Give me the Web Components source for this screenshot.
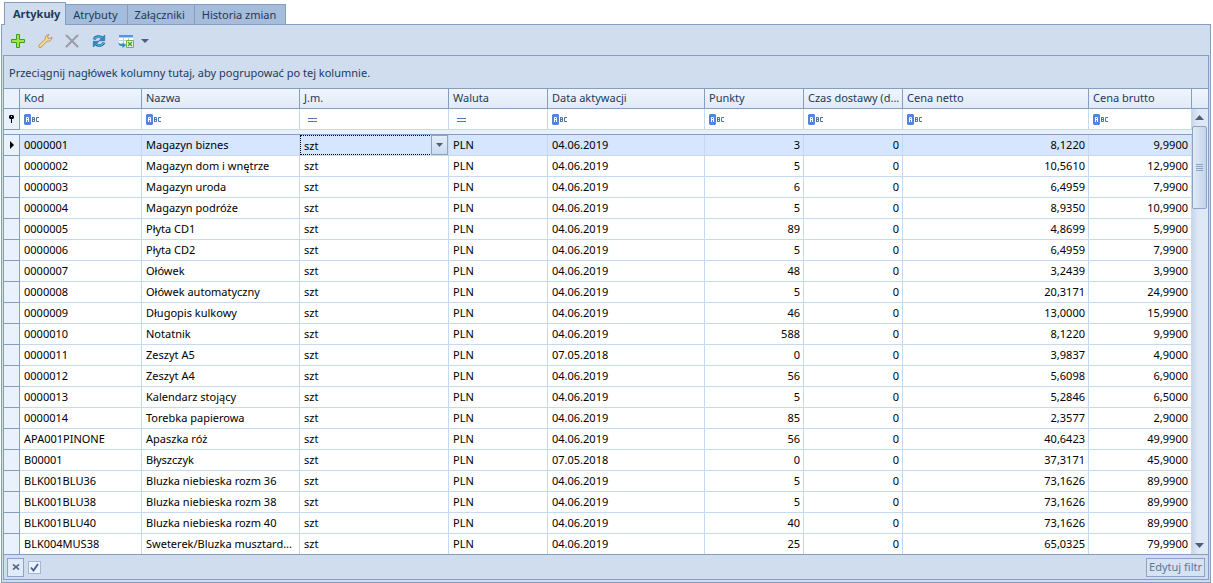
<!DOCTYPE html>
<html lang="pl">
<head>
<meta charset="utf-8">
<title>Artykuły</title>
<style>
html, body { margin: 0; background: #fff; }
body { font: 11px/16px "Noto Sans", "Open Sans", sans-serif; color: #1e395b; padding: 2px 2px 0 1px; --line: #859ebf; --panel: #cfddee; --soft: #c5d9f1; }
</style>
</head>
<body>
<article-view></article-view>

<template id="view-tpl">
<style>
:host { display: block; }
.panel { border: 1px solid var(--line); background: var(--panel); padding: 0 1px 2px; }
</style>
<tab-strip></tab-strip>
<div class="panel">
  <tool-bar></tool-bar>
  <data-grid></data-grid>
</div>
</template>

<template id="tabs-tpl">
<style>
:host { display: flex; align-items: flex-end; padding-left: 3px; margin-bottom: -1px; position: relative; }
button { font: inherit; color: inherit; margin: 0 0 1px; height: 20px; padding: 0 9px 0 7px; border: 1px solid var(--line); border-width: 1px 1px 0 0; background: #a5bcda; }
button[aria-selected=true] { height: 23px; margin: 0; padding: 0 5px 1px 8px; border-left-width: 1px; font-weight: bold; background: var(--panel); }
</style>
<button role="tab" aria-selected="true">Artykuły</button>
<button role="tab" aria-selected="false">Atrybuty</button>
<button role="tab" aria-selected="false">Załączniki</button>
<button role="tab" aria-selected="false">Historia zmian</button>
</template>

<template id="tools-tpl">
<style>
:host { display: flex; align-items: center; gap: 3px; height: 30px; padding: 2px 0 0 3px; box-sizing: border-box; }
button { width: 24px; height: 24px; padding: 0; border: 0; background: none; display: grid; place-items: center; }
button.more { width: 16px; margin-left: -4px; }
svg { display: block; }
</style>
<button aria-label="Dodaj"><svg width="16" height="16" viewBox="0 0 16 16"><path d="M6.5 1.5h3v5h5v3h-5v5h-3v-5h-5v-3h5z" fill="#a5e63c" stroke="#3a9c2c"/></svg></button>
<button aria-label="Edytuj"><svg width="16" height="16" viewBox="0 0 16 16"><path d="M2 12.200L8.200 6.200C7.800 4 9.200 1.800 12 1.600L10.600 3.600l.4 1.600 1.800.4L15 4.200c0 2.800-2.200 4.600-4.800 3.900L4.200 14.200C2.700 15.500 .8 13.700 2 12.200z" fill="#fbd58a" stroke="#a98556" stroke-width=".8"/></svg></button>
<button aria-label="Usuń" disabled><svg width="16" height="16" viewBox="0 0 16 16"><path d="M2.500 2.500l11 11M13.500 2.500l-11 11" stroke="#9a9da3" stroke-width="2" stroke-linecap="round"/></svg></button>
<button aria-label="Odśwież"><svg width="16" height="16" viewBox="0 0 16 16"><path d="M3 6.500C4 3.600 8.600 2.600 11 4.800" fill="none" stroke="#17659d" stroke-width="2.800"/><path d="M3.200 6.200C4.400 3.800 8.600 3 10.800 4.900" fill="none" stroke="#5cbcea" stroke-width="1.200"/><path d="M13.700 2v5.700H8z" fill="#2b8cc6" stroke="#17659d" stroke-width=".6"/><path d="M13 9.500C12 12.400 7.400 13.400 5 11.200" fill="none" stroke="#17659d" stroke-width="2.800"/><path d="M12.800 9.800C11.600 12.200 7.400 13 5.200 11.100" fill="none" stroke="#5cbcea" stroke-width="1.200"/><path d="M2.300 14V8.300H8z" fill="#2b8cc6" stroke="#17659d" stroke-width=".6"/></svg></button>
<button aria-label="Eksportuj"><svg width="16" height="16" viewBox="0 0 16 16"><path d="M1 2h14v8H1z" fill="#fff"/><path d="M1 2h14v2.500H1z" fill="#5d93dd"/><path d="M1 7.500h14M5.500 5v5M10.500 5v5" stroke="#c3cedd"/><path d="M.500 9.500c0 3 2 3.500 4 3.500v2l3.500-2.800L4.500 9.500v1.700C2.500 11.200 1.500 10.700 .5 9.500z" fill="#2e8bc9"/><path d="M8.500 7.500h7v7h-7z" fill="#e9f8e2" stroke="#6cb353"/><path d="M10 9l4 4M14 9l-4 4" stroke="#3d9a2c" stroke-width="1.200"/></svg></button>
<button class="more" aria-label="Więcej"><svg width="8" height="4" viewBox="0 0 8 4"><path d="M0 0h8L4 4z" fill="#4b5f80"/></svg></button>
</template>

<template id="scroll-tpl">
<style>
:host { display: flex; flex-direction: column; background: linear-gradient(90deg, #c7d7eb, #dfe9f5 40%, #dfe9f5); }
button { width: 16px; height: 17px; padding: 0 1px 0 0; border: 0; background: none; display: grid; place-items: center; }
.track { flex: 1; }
.thumb { box-sizing: border-box; height: 83px; margin-right: 1px; border: 1px solid #8ba4c8; border-radius: 2px; background: linear-gradient(90deg, #dfeaf7, #c3d4e9); display: grid; place-items: center; }
</style>
<button aria-label="W górę"><svg width="9" height="5" viewBox="0 0 9 5"><path d="M0 5h9L4.500 0z" fill="#4b5f80"/></svg></button>
<div class="track"><div class="thumb"><svg width="7" height="8" viewBox="0 0 7 8"><path d="M0 .5h7M0 2.500h7M0 4.500h7M0 6.500h7" stroke="#8ba4c8"/></svg></div></div>
<button aria-label="W dół"><svg width="9" height="5" viewBox="0 0 9 5"><path d="M0 0h9L4.500 5z" fill="#4b5f80"/></svg></button>
</template>

<template id="footer-tpl">
<style>
:host { display: flex; align-items: center; justify-content: space-between; height: 24px; padding: 0 3px; border-top: 1px solid var(--line); }
.left { display: flex; align-items: center; gap: 4px; }
button { box-sizing: border-box; font: inherit; color: #5c7596; border: 1px solid #8ba4c8; background: #d5e3f3; height: 19px; padding: 0 2px; }
.close { width: 17px; padding: 0; display: grid; place-items: center; background: #dfebf8; }
input { appearance: none; box-sizing: border-box; width: 13px; height: 13px; margin: 0; border: 1px solid #a3b7d4; background: #eef3fa; }
label { display: grid; position: relative; }
label svg { position: absolute; left: 2px; top: 2px; pointer-events: none; }
</style>
<div class="left">
<button class="close" aria-label="Wyczyść filtr"><svg width="8" height="6" viewBox="0 0 8 6"><path d="M1 .5l6 5M7 .5l-6 5" stroke="#4b5f80" stroke-width="1.600"/></svg></button>
<label><input type="checkbox" checked aria-label="Filtr aktywny"><svg width="9" height="9" viewBox="0 0 9 9"><path d="M1 4.500l2.500 3L8 1" fill="none" stroke="#3c5f93" stroke-width="1.800"/></svg></label>
</div>
<button>Edytuj filtr</button>
</template>

<template id="grid-tpl">
<style>
:host { display: block; border: 1px solid var(--line); }
.group { height: 32px; line-height: 34px; padding-left: 5px; border-bottom: 1px solid var(--line); }
.body { display: grid; grid-template-columns: minmax(0, 1fr) 16px; background: #fff; }
.side { display: flex; flex-direction: column; }
.cap { height: 19px; border-bottom: 1px solid var(--line); background: linear-gradient(#eff5fc, #e0eaf8); }
scroll-bar { flex: 1; }
table { width: 100%; table-layout: fixed; border-collapse: separate; border-spacing: 0; color: #000; }
th, td { box-sizing: border-box; padding: 0 2px 0 4px; border-right: 1px solid var(--soft); border-bottom: 1px solid var(--soft); height: 21px; line-height: 20px; text-align: left; font-weight: normal; white-space: nowrap; overflow: hidden; }
thead th { height: 20px; line-height: 16px; padding-bottom: 2px; color: #1e395b; background: linear-gradient(#eff5fc, #e0eaf8); border-color: var(--line); }
th.mark, td.mark { padding: 0; background: #e9f2fc; border-color: var(--line); }
.mark svg { display: block; margin: 0 auto; }
td.num { text-align: right; padding-right: 3px; }
.gap td { height: 5px; line-height: 4px; background: #e9f2fc; border-right: 0; border-bottom-color: var(--line); }
.current td:not(.mark) { background: #d5e6fe; }
tbody:last-child tr:last-child td { height: 20px; border-bottom: 0; }
td.edit { padding: 0; }
.filter { display: flex; align-items: center; gap: 2px; }
.filter button { border: 0; padding: 0; background: none; }
.filter svg { display: block; }
.filter input { flex: 1; min-width: 0; height: 16px; border: 0; padding: 0; background: none; font: inherit; outline: 0; }
.combo { display: grid; grid-template-columns: 1fr 17px; height: 20px; }
select { appearance: none; box-sizing: border-box; grid-area: 1 / 1 / 2 / 3; margin: 0; height: 20px; padding: 0 0 2px 3px; border: 1px dotted #000; border-radius: 0; background: none; font: inherit; color: inherit; }
.arrow { box-sizing: border-box; grid-area: 1 / 2; border: 1px solid #8ba4c8; background: linear-gradient(#e3edf9, #cbdcf0); display: grid; place-items: center; pointer-events: none; z-index: 1; }
</style>
<div class="group">Przeciągnij nagłówek kolumny tutaj, aby pogrupować po tej kolumnie.</div>
<div class="body">
<table>
<colgroup></colgroup>
<thead></thead>
<tbody class="top"></tbody>
<tbody class="rows"></tbody>
</table>
<div class="side"><div class="cap"></div><scroll-bar></scroll-bar></div>
</div>
<filter-footer></filter-footer>
</template>

<script>
const define = (name, id, setup) => customElements.define(name, class extends HTMLElement {
  constructor() {
    super();
    this.attachShadow({ mode: 'open' }).append(document.getElementById(id).content.cloneNode(true));
    if (setup) setup(this.shadowRoot);
  }
});

const columns = [
  ['Kod', 122, 'abc'], ['Nazwa', 158, 'abc'], ['J.m.', 149, 'eq'], ['Waluta', 99, 'eq'], ['Data aktywacji', 157, 'abc'],
  ['Punkty', 99, 'abc', 1], ['Czas dostawy (d...', 99, 'abc', 1], ['Cena netto', 186, 'abc', 1], ['Cena brutto', 103, 'abc', 1]
];
const articles = `0000001|Magazyn biznes|04.06.2019|3|8,1220|9,9900
0000002|Magazyn dom i wnętrze|04.06.2019|5|10,5610|12,9900
0000003|Magazyn uroda|04.06.2019|6|6,4959|7,9900
0000004|Magazyn podróże|04.06.2019|5|8,9350|10,9900
0000005|Płyta CD1|04.06.2019|89|4,8699|5,9900
0000006|Płyta CD2|04.06.2019|5|6,4959|7,9900
0000007|Ołówek|04.06.2019|48|3,2439|3,9900
0000008|Ołówek automatyczny|04.06.2019|5|20,3171|24,9900
0000009|Długopis kulkowy|04.06.2019|46|13,0000|15,9900
0000010|Notatnik|04.06.2019|588|8,1220|9,9900
0000011|Zeszyt A5|07.05.2018|0|3,9837|4,9000
0000012|Zeszyt A4|04.06.2019|56|5,6098|6,9000
0000013|Kalendarz stojący|04.06.2019|5|5,2846|6,5000
0000014|Torebka papierowa|04.06.2019|85|2,3577|2,9000
APA001PINONE|Apaszka róż|04.06.2019|56|40,6423|49,9900
B00001|Błyszczyk|07.05.2018|0|37,3171|45,9000
BLK001BLU36|Bluzka niebieska rozm 36|04.06.2019|5|73,1626|89,9900
BLK001BLU38|Bluzka niebieska rozm 38|04.06.2019|5|73,1626|89,9900
BLK001BLU40|Bluzka niebieska rozm 40|04.06.2019|40|73,1626|89,9900
BLK004MUS38|Sweterek/Bluzka musztard...|04.06.2019|25|65,0325|79,9900`.split('\n').map(line => {
  const [code, name, date, points, net, gross] = line.split('|');
  return [code, name, 'szt', 'PLN', date, points, '0', net, gross];
});
const icons = {
  abc: '<svg width="16" height="11" viewBox="0 0 16 11"><path d="M1 0h5l1 1v9l-1 1H1l-1-1V1z" fill="#5585d6"/><path d="M2.500 8V3.500h2V8M2.500 5.500h2" fill="none" stroke="#fff"/><path d="M8.500 3v5M8 3.500h2.500v4H8M8.500 5.500h2M15 3.500h-2.500v4H15" fill="none" stroke="#4f74ae"/></svg>',
  eq: '<svg width="16" height="11" viewBox="0 0 16 11"><path d="M4 4.500h9M4 7.500h9" stroke="#5076b4"/></svg>'
};

define('tab-strip', 'tabs-tpl');
define('tool-bar', 'tools-tpl');
define('scroll-bar', 'scroll-tpl');
define('filter-footer', 'footer-tpl');
define('data-grid', 'grid-tpl', root => {
  root.querySelector('colgroup').innerHTML = '<col style="width:16px">' + columns.map(c => `<col style="width:${c[1]}px">`).join('');
  root.querySelector('thead').innerHTML = '<tr><th class="mark"></th>' + columns.map(c => `<th scope="col">${c[0]}</th>`).join('') + '</tr>';
  root.querySelector('.top').innerHTML =
    '<tr><td class="mark"><svg width="5" height="8" viewBox="0 0 5 8"><path d="M1 0h3l1 1v2L4 4H3v4H2V4H1L0 3V1z"/><path d="M2 1h1v1H2z" fill="#e9f2fc"/></svg></td>' +
    columns.map(c => `<td><div class="filter"><button aria-label="Warunek: ${c[0]}">${icons[c[2]]}</button><input type="text" aria-label="Filtr: ${c[0]}"></div></td>`).join('') +
    '</tr><tr class="gap"><td colspan="10"></td></tr>';
  root.querySelector('.rows').innerHTML = articles.map((row, r) =>
    `<tr${r ? '' : ' class="current"'}><td class="mark">${r ? '' : '<svg width="5" height="8" viewBox="0 0 5 8"><path d="M1 0v8l4-4z"/></svg>'}</td>` +
    row.map((value, c) => r === 0 && c === 2
      ? '<td class="edit"><div class="combo"><select aria-label="J.m."><option>szt</option></select><span class="arrow"><svg width="7" height="4" viewBox="0 0 7 4"><path d="M0 0h7L3.500 4z" fill="#4b5f80"/></svg></span></div></td>'
      : `<td${columns[c][3] ? ' class="num"' : ''}>${value}</td>`).join('') + '</tr>').join('');
});
define('article-view', 'view-tpl');
</script>
</body>
</html>
